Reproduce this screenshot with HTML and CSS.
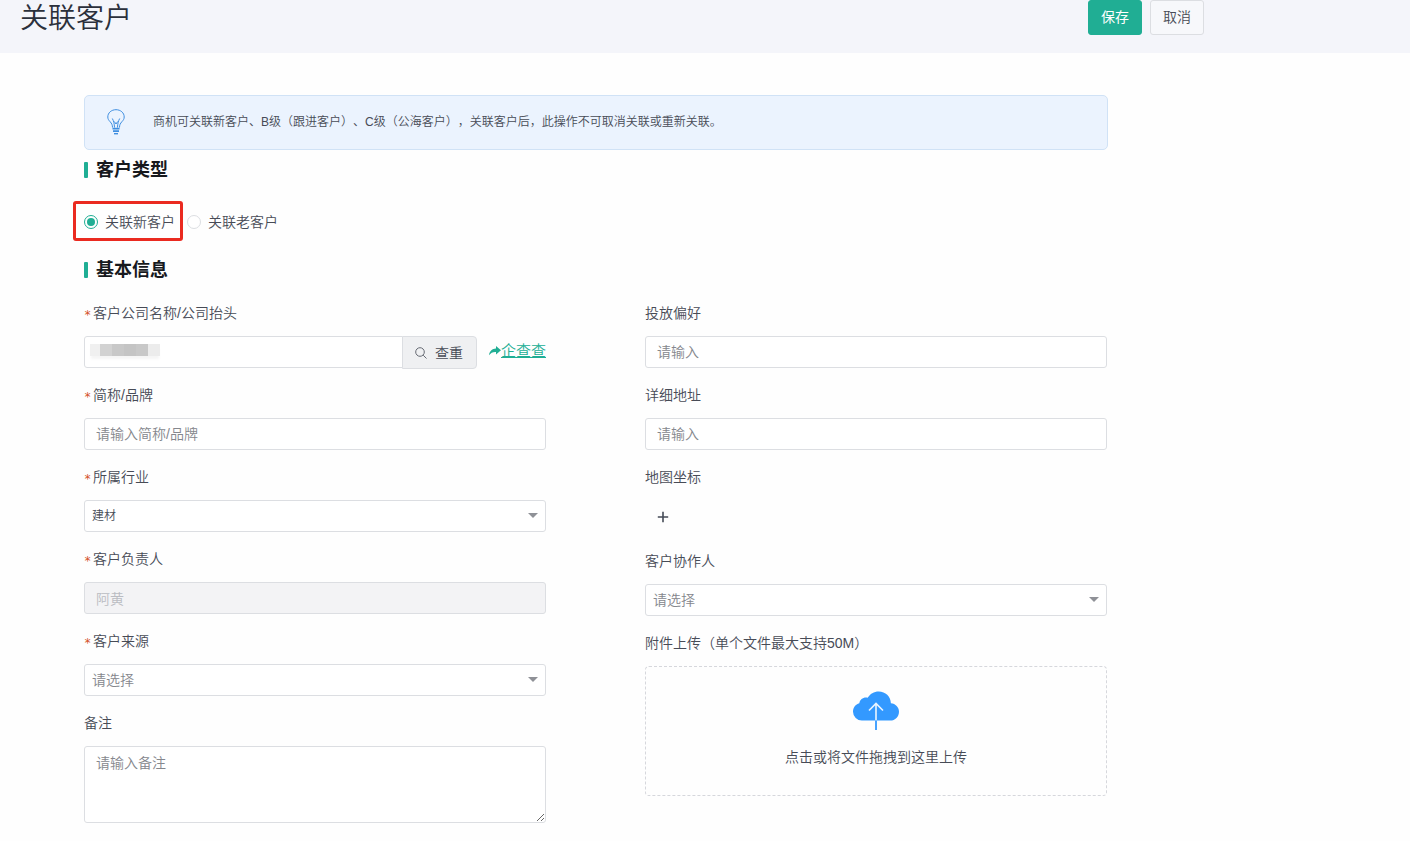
FILE: index.html
```html
<!DOCTYPE html>
<html lang="zh-CN">
<head>
<meta charset="utf-8">
<meta name="viewport" content="width=device-width, initial-scale=1">
<title>关联客户</title>
<link rel="stylesheet" href="styles.css">
</head>
<body>
<header class="page-header">
  <div class="page-header-inner">
    <h1 class="page-title">关联客户</h1>
    <div class="actions">
      <button class="btn btn-primary" type="submit" form="customer-form">保存</button>
      <button class="btn" type="button">取消</button>
    </div>
  </div>
</header>
<main class="content">
  <div class="notice">
    <svg class="notice-icon" viewBox="0 0 18 26" width="18" height="26" fill="none" stroke="#3f8ee0" stroke-width="1" aria-hidden="true">
      <path d="M5.500 18.500c0-2.600-.8-4-2.400-5.800C1.700 11.200.8 10 .8 8 .8 3.800 4.400.7 9 .7S17.200 3.800 17.200 8c0 2-.9 3.200-2.300 4.700-1.600 1.800-2.400 3.200-2.400 5.800"/>
      <path d="M5.300 9.500c1.400 2.500 2 5 2.200 9M12.700 9.500c-1.400 2.500-2 5-2.200 9M7.300 12.500L9 15l1.700-2.500"/>
      <path d="M5.500 19.700h7M6 22.200h6" stroke-width="1.800"/>
      <path d="M7 24.700h4" stroke-width="1.400"/>
    </svg>
    <p class="notice-text">商机可关联新客户、B级（跟进客户）、C级（公海客户），关联客户后，此操作不可取消关联或重新关联。</p>
  </div>
  <form id="customer-form">
    <h2 class="section-title">客户类型</h2>
    <div class="radios">
      <label class="radio radio-marked"><input type="radio" name="type" checked>关联新客户</label>
      <label class="radio"><input type="radio" name="type">关联老客户</label>
    </div>
    <h2 class="section-title section-basic">基本信息</h2>
    <div class="columns">
      <div class="column">
        <div class="field">
          <label class="label required" for="company">客户公司名称/公司抬头</label>
          <div class="company-row">
            <div class="input-group">
              <div class="masked">
                <input class="control" id="company" type="text">
                <span class="mask" aria-hidden="true"></span>
              </div>
              <button class="check-btn" type="button">
                <svg viewBox="0 0 12 12" width="12" height="12" fill="none" stroke="#666a73" aria-hidden="true"><circle cx="5" cy="5" r="4.300"/><path d="M8.200 8.200l3.300 3.300"/></svg>
                查重
              </button>
            </div>
            <a class="lookup" href="#"><svg viewBox="0 0 12 10" width="12" height="10" aria-hidden="true"><path fill="#20ae94" d="M0 9.300C.7 4.800 3.300 2.700 7 2.600V0l5 4.200-5 4.200V5.900C4 5.700 1.700 6.700 0 9.300z"/></svg><span>企查查</span></a>
          </div>
        </div>
        <div class="field">
          <label class="label required" for="brand">简称/品牌</label>
          <input class="control" id="brand" type="text" placeholder="请输入简称/品牌">
        </div>
        <div class="field">
          <label class="label required" for="industry">所属行业</label>
          <div class="select"><select class="control chosen" id="industry"><option>建材</option></select></div>
        </div>
        <div class="field">
          <label class="label required" for="owner">客户负责人</label>
          <input class="control" id="owner" type="text" value="阿黄" disabled>
        </div>
        <div class="field">
          <label class="label required" for="source">客户来源</label>
          <div class="select"><select class="control" id="source"><option>请选择</option></select></div>
        </div>
        <div class="field">
          <label class="label" for="remark">备注</label>
          <textarea class="control remark" id="remark" placeholder="请输入备注"></textarea>
        </div>
      </div>
      <div class="column">
        <div class="field">
          <label class="label" for="preference">投放偏好</label>
          <input class="control" id="preference" type="text" placeholder="请输入">
        </div>
        <div class="field">
          <label class="label" for="address">详细地址</label>
          <input class="control" id="address" type="text" placeholder="请输入">
        </div>
        <div class="field">
          <label class="label" for="map">地图坐标</label>
          <button class="add-btn" id="map" type="button"><svg viewBox="0 0 12 12" width="12" height="12" stroke="#454b57" stroke-width="1.600" aria-hidden="true"><path d="M6 .8v10.400M.8 6h10.400"/></svg></button>
        </div>
        <div class="field">
          <label class="label" for="partner">客户协作人</label>
          <div class="select"><select class="control" id="partner"><option>请选择</option></select></div>
        </div>
        <div class="field">
          <label class="label" for="upload">附件上传（单个文件最大支持50M）</label>
          <button class="upload" id="upload" type="button">
            <svg viewBox="0 0 46 40" width="46" height="40" aria-hidden="true">
              <path fill="#3399ff" d="M9 29.500A8.900 8.900 0 0 1 0 20.700c0-4 2.600-7.400 6.300-8.400C7 8.300 10.500 5.900 14.700 6.800 17 2.800 21 .5 25.700.5c6.800 0 12 5 12.200 11.700C42.500 12.500 46 16.200 46 20.700c0 5-3.800 8.800-8.800 8.800z"/>
              <path d="M23 12.500v17M16 19.500l7-7 7 7" fill="none" stroke="#eaf5ff" stroke-width="1.600"/>
              <path d="M23 29.500V39" stroke="#3399ff" stroke-width="1.800"/>
            </svg>
            <span>点击或将文件拖拽到这里上传</span>
          </button>
        </div>
      </div>
    </div>
  </form>
</main>
</body>
</html>
```

FILE: styles.css
```css
* {
  box-sizing: border-box;
}

body {
  margin: 0;
  background: #fefefe;
  color: #474b56;
  font-family: "Liberation Sans", "Noto Sans CJK SC", sans-serif;
  font-size: 14px;
  font-weight: 350;
  line-height: 20px;
  text-spacing-trim: space-all;
}

button,
input,
select,
textarea {
  font: inherit;
  color: inherit;
}

.page-header {
  background: #f4f5fa;
  padding: 0 20px 15px;
}

.page-header-inner {
  display: flex;
  justify-content: space-between;
  align-items: flex-start;
  max-width: 1184px;
}

.page-title {
  margin: 0;
  color: #2b303b;
  font-size: 28px;
  font-weight: 350;
  line-height: 38px;
}

.actions {
  display: flex;
  gap: 8px;
}

.btn {
  height: 35px;
  padding: 0 12px 2px;
  border: 1px solid #dcdee2;
  border-radius: 3px;
  background: #f7f8fb;
}

.btn-primary {
  border-color: #20ae94;
  background: #20ae94;
  color: #fff;
  font-weight: 400;
}

.content {
  max-width: 1108px;
  padding: 42px 0 18px 84px;
}

.notice {
  display: flex;
  align-items: center;
  gap: 28px;
  min-height: 55px;
  padding: 0 22px 2px;
  border: 1px solid #d0e2f6;
  border-radius: 5px;
  background: #ebf3fe;
}

.notice-icon {
  flex: none;
}

.notice-text {
  margin: 0;
  font-size: 12px;
}

.section-title {
  display: flex;
  align-items: center;
  gap: 8px;
  margin: 8px 0 0;
  color: #17191d;
  font-size: 18px;
  font-weight: 700;
  line-height: 24px;
}

.section-title::before {
  content: "";
  width: 4px;
  height: 16px;
  border-radius: 1px;
  background: #20ae94;
}

.section-basic {
  margin-top: 26px;
}

.radios {
  display: flex;
  gap: 12px;
  margin-top: 30px;
}

.radio {
  position: relative;
  display: flex;
  align-items: center;
  gap: 7px;
}

.radio input {
  appearance: none;
  width: 14px;
  height: 14px;
  margin: 0;
  border: 1px solid #dcdee2;
  border-radius: 50%;
  background: #fff;
}

.radio input:checked {
  border-color: #20ae94;
  background: #20ae94;
  background-clip: content-box;
  padding: 2px;
}

.radio-marked::after {
  content: "";
  position: absolute;
  inset: -11px -8px -9px -11px;
  border: 3px solid #ea2a20;
  border-radius: 3px;
  pointer-events: none;
}

.columns {
  display: grid;
  grid-template-columns: 1fr 1fr;
  gap: 99px;
  margin-top: 21px;
  padding-right: 1px;
}

.column {
  display: flex;
  flex-direction: column;
  gap: 17px;
  min-width: 0;
}

.field {
  display: flex;
  flex-direction: column;
  align-items: stretch;
  gap: 13px;
}

.label {
  display: flex;
}

.required::before {
  content: "*";
  width: 9px;
  height: 20px;
  color: #d4512c;
  font-family: "DejaVu Sans Mono", monospace;
  font-size: 12px;
  font-weight: 400;
  line-height: 24px;
}

.control {
  display: block;
  width: 100%;
  height: 32px;
  padding: 0 11px;
  border: 1px solid #dcdee2;
  border-radius: 3px;
  background: #fff;
}

.control::placeholder {
  color: #85878d;
  opacity: 1;
}

.control:disabled {
  background: #f3f3f5;
  color: #babcc2;
}

.select {
  position: relative;
}

.select .control {
  appearance: none;
  padding: 0 24px 0 7px;
  color: #85878d;
}

.select .chosen {
  color: #474b56;
  font-size: 12px;
}

.select::after {
  content: "";
  position: absolute;
  top: 13px;
  right: 8px;
  border: 5px solid transparent;
  border-top-color: #8f9197;
  border-bottom-width: 0;
  pointer-events: none;
}

.company-row {
  display: flex;
  align-items: center;
  gap: 12px;
  height: 32px;
}

.input-group {
  display: flex;
  flex: 1;
}

.masked {
  position: relative;
  flex: 1;
}

.masked .control {
  border-radius: 3px 0 0 3px;
}

.mask {
  position: absolute;
  top: 8px;
  left: 6px;
  width: 70px;
  height: 12px;
  background: linear-gradient(90deg, #f0f0f0 10px, #d2d2d2 10px 22px, #c8c8c8 22px 34px, #c4c4c4 34px 46px, #c8c8c8 46px 58px, #ececec 58px);
  box-shadow: 0 4px 3px -1px #f5f5f5;
}

.check-btn {
  display: flex;
  align-items: center;
  gap: 8px;
  height: 33px;
  padding: 0 13px 0 12px;
  margin: 0 0 -1px -1px;
  border: 1px solid #dcdee2;
  border-radius: 0 4px 4px 0;
  background: #eff0f2;
}

.lookup {
  display: flex;
  align-items: center;
  padding-bottom: 2px;
  color: #20ae94;
  font-size: 15px;
  text-decoration: none;
}

.lookup span {
  text-decoration: underline;
}

.remark {
  height: 77px;
  padding: 6px 11px;
  resize: vertical;
}

.add-btn {
  display: flex;
  align-items: center;
  align-self: flex-start;
  height: 34px;
  padding: 0 12px;
  border: 0;
  background: none;
}

.upload {
  display: flex;
  flex-direction: column;
  align-items: center;
  gap: 16px;
  height: 130px;
  padding: 24px 12px;
  border: 1px dashed #d6d7dc;
  border-radius: 4px;
  background: none;
}
```
